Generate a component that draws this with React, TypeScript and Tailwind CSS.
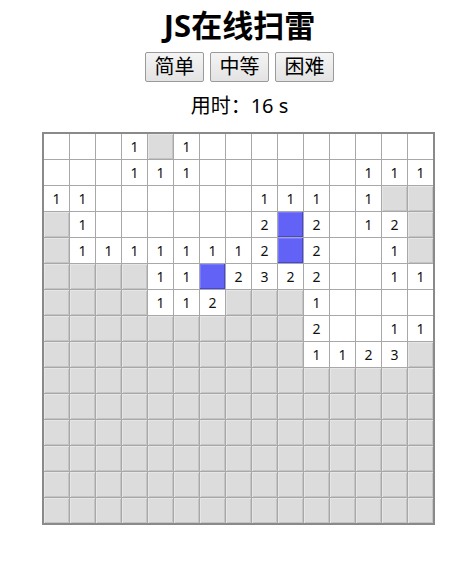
import React from 'react'

// c = covered, m = blue (mine/flag), . = opened blank, digits = count
const BOARD = [
  '...1c1.........',
  '...111......111',
  '11......111.1cc',
  'c1......2m2.12c',
  'c11111112m2..1c',
  'cccc11m2322..11',
  'cccc112ccc1....',
  'cccccccccc2..11',
  'cccccccccc1123c',
  'ccccccccccccccc',
  'ccccccccccccccc',
  'ccccccccccccccc',
  'ccccccccccccccc',
  'ccccccccccccccc',
  'ccccccccccccccc',
]

const LEVELS = ['简单', '中等', '困难']

function Cell({ v }: { v: string }) {
  if (v === 'c') {
    return <div className="w-[25px] h-[25px] bg-[#dcdcdc] shadow-[inset_1px_1px_0_#e6e6e6,inset_-1px_-1px_0_#c4c4c4]" />
  }
  if (v === 'm') {
    return <div className="w-[25px] h-[25px] bg-[#6262f6] shadow-[inset_-1px_-1px_0_#4646d8,inset_1px_1px_0_#7a7aff]" />
  }
  return (
    <div className="w-[25px] h-[25px] bg-white flex items-center justify-center text-[14px] text-[#111] leading-none">
      {v === '.' ? '' : v}
    </div>
  )
}

export default function App() {
  return (
    <div
      className="w-[457px] min-h-[574px] bg-white pl-[22px] flex flex-col items-center"
      style={{ fontFamily: '"Noto Sans", "Noto Sans CJK SC", sans-serif' }}
    >
      <h1 className="mt-[7px] text-[31px] font-bold leading-[37px] text-black">JS在线扫雷</h1>
      <div className="mt-[8px] flex gap-[6px]">
        {LEVELS.map(l => (
          <button
            key={l}
            className="w-[59px] h-[30px] bg-gradient-to-b from-[#f4f4f4] to-[#e3e3e3] border border-[#9a9a9a] rounded-[2px] text-[20px] leading-none text-black"
          >
            {l}
          </button>
        ))}
      </div>
      <p className="mt-[12px] text-[20px] leading-[24px] text-black">用时：16 s</p>
      <div className="mt-[14px] ml-[-2px] grid grid-cols-[repeat(15,25px)] gap-px bg-[#a8a8a8] border-2 border-[#8a8a8a]">
        {BOARD.flatMap((row, r) => row.split('').map((v, c) => <Cell key={`${r}-${c}`} v={v} />))}
      </div>
    </div>
  )
}
